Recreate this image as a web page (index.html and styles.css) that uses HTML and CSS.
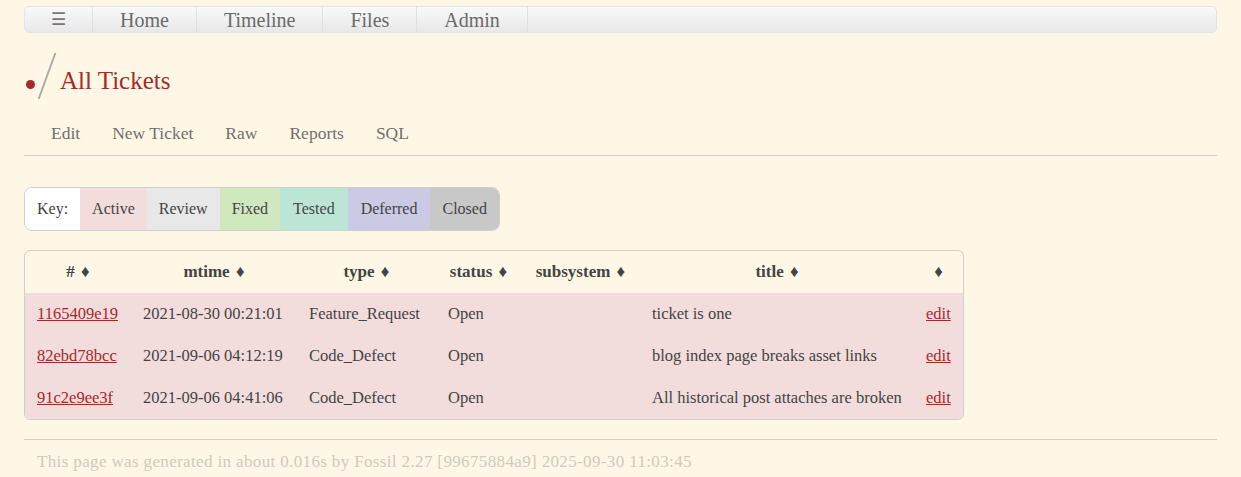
FILE: index.html
```html
<!DOCTYPE html>
<html>
<head>
<meta charset="utf-8">
<link rel="stylesheet" href="styles.css">
</head>
<body>
<div class="page">
  <nav class="mainmenu">
    <a class="menu-item burger">&#9776;</a>
    <a class="menu-item">Home</a>
    <a class="menu-item">Timeline</a>
    <a class="menu-item">Files</a>
    <a class="menu-item">Admin</a>
  </nav>
  <div class="header">
    <span class="logo-dot"></span>
    <span class="slash"></span>
    <h1 class="title">All Tickets</h1>
  </div>
  <div class="submenu">
    <a>Edit</a>
    <a>New Ticket</a>
    <a>Raw</a>
    <a>Reports</a>
    <a>SQL</a>
  </div>
  <div class="content">
    <div class="keybar">
      <span class="key k-white">Key:</span>
      <span class="key k-active">Active</span>
      <span class="key k-review">Review</span>
      <span class="key k-fixed">Fixed</span>
      <span class="key k-tested">Tested</span>
      <span class="key k-deferred">Deferred</span>
      <span class="key k-closed">Closed</span>
    </div>
    <div class="tablewrap">
      <table class="report">
        <colgroup>
          <col class="c1"><col class="c2"><col class="c3"><col class="c4"><col class="c5"><col class="c6"><col class="c7">
        </colgroup>
        <thead>
          <tr>
            <th># &#9830;</th>
            <th>mtime &#9830;</th>
            <th>type &#9830;</th>
            <th>status &#9830;</th>
            <th>subsystem &#9830;</th>
            <th>title &#9830;</th>
            <th>&#9830;</th>
          </tr>
        </thead>
        <tbody>
          <tr>
            <td><a>1165409e19</a></td>
            <td>2021-08-30 00:21:01</td>
            <td>Feature_Request</td>
            <td>Open</td>
            <td></td>
            <td>ticket is one</td>
            <td><a>edit</a></td>
          </tr>
          <tr>
            <td><a>82ebd78bcc</a></td>
            <td>2021-09-06 04:12:19</td>
            <td>Code_Defect</td>
            <td>Open</td>
            <td></td>
            <td>blog index page breaks asset links</td>
            <td><a>edit</a></td>
          </tr>
          <tr>
            <td><a>91c2e9ee3f</a></td>
            <td>2021-09-06 04:41:06</td>
            <td>Code_Defect</td>
            <td>Open</td>
            <td></td>
            <td>All historical post attaches are broken</td>
            <td><a>edit</a></td>
          </tr>
        </tbody>
      </table>
    </div>
  </div>
  <div class="footer">This page was generated in about 0.016s by Fossil 2.27 [99675884a9] 2025-09-30 11:03:45</div>
</div>
</body>
</html>
```
FILE: styles.css
```css
html, body {
  margin: 0;
  padding: 0;
  background: #fef7e5;
}
body {
  font-family: "Liberation Serif", "Times New Roman", serif;
  color: #444;
}
.page {
  padding: 6px 24px 0 24px;
}
.mainmenu {
  display: flex;
  height: 25px;
  border: 1px solid #e4e4e4;
  border-radius: 5px;
  background: linear-gradient(#f9f9f9, #e8e8e8);
}
.menu-item {
  display: flex;
  align-items: center;
  padding: 1px 27px 0 27px;
  font-size: 20px;
  color: #6a6a6a;
  border-right: 1px solid #e0e0e0;
}
.burger {
  padding: 0 26px 0 26px;
  font-size: 17px;
  color: #777;
}
.header {
  display: flex;
  align-items: flex-end;
  height: 68px;
}
.logo-dot {
  width: 9px;
  height: 9px;
  border-radius: 50%;
  background: #a52a2a;
  margin: 0 0 12px 2px;
}
.slash {
  width: 2px;
  height: 46px;
  background: #aaa;
  transform: skewX(-20deg);
  margin: 0 12px 2px 11px;
}
.title {
  margin: 0 0 6px 0;
  font-weight: normal;
  font-size: 25px;
  color: #a52a2a;
}
.submenu {
  display: flex;
  padding: 22px 0 0 17px;
  height: 32px;
  border-bottom: 1px solid #d2cfc8;
}
.submenu a {
  padding: 0 10px;
  margin-right: 12px;
  font-size: 17.5px;
  color: #707070;
}
.content {
  padding-top: 31px;
}
.keybar {
  display: inline-flex;
  border: 1px solid #cfcfcf;
  border-radius: 8px;
  overflow: hidden;
  height: 42px;
}
.key {
  display: flex;
  align-items: center;
  padding: 0 12px;
  font-size: 16px;
  color: #444;
}
.k-white { background: #ffffff; }
.k-active { background: #f2dcdc; }
.k-review { background: #e8e8e8; }
.k-fixed { background: #cfe8bd; }
.k-tested { background: #bde5d6; padding: 0 13px; }
.k-deferred { background: #cacae5; padding: 0 13px; }
.k-closed { background: #c8c8c8; }
.tablewrap {
  margin-top: 19px;
  width: 938px;
  border: 1px solid #cfcfcf;
  border-radius: 6px;
  overflow: hidden;
}
.report {
  border-collapse: collapse;
  width: 938px;
  table-layout: fixed;
  font-size: 16.5px;
}
.c1 { width: 106px; }
.c2 { width: 166px; }
.c3 { width: 139px; }
.c4 { width: 85px; }
.c5 { width: 119px; }
.c6 { width: 274px; }
.c7 { width: 49px; }
.report th {
  height: 42px;
  padding: 0;
  font-size: 17px;
  font-weight: bold;
  color: #444;
  text-align: center;
  white-space: nowrap;
  word-spacing: 2px;
}
.report td {
  height: 42px;
  padding: 0 0 0 12px;
  background: #f2dcdc;
  white-space: nowrap;
  color: #444;
}
.report a {
  color: #a52a2a;
  text-decoration: underline;
}
.footer {
  margin-top: 19px;
  border-top: 1px solid #d8d2c6;
  padding: 12px 0 0 13px;
  font-size: 17px;
  letter-spacing: 0.36px;
  color: #cfcac0;
}
```
